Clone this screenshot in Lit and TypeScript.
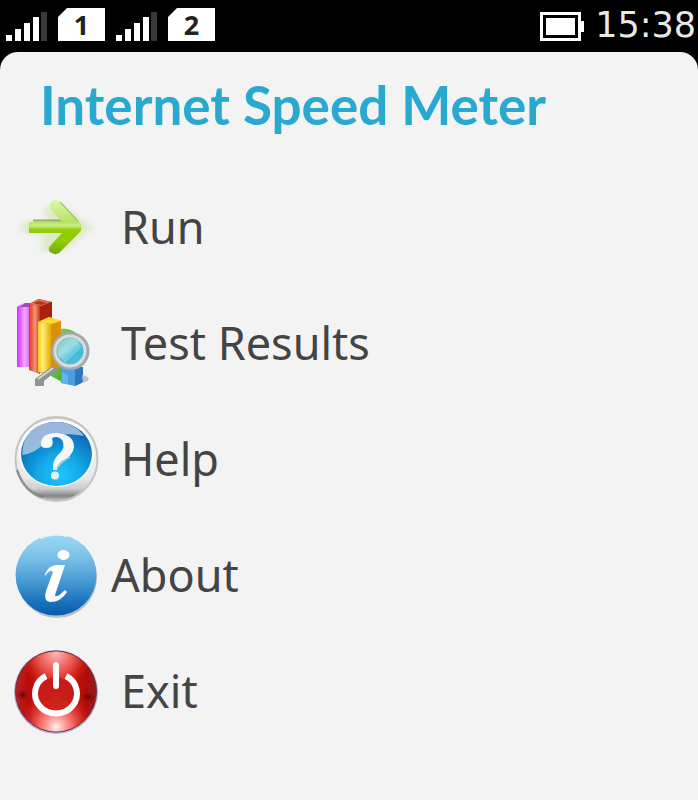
import { LitElement, html, css, svg } from "lit";
import { customElement, property } from "lit/decorators.js";

const runIcon = html`<svg class="icon" viewBox="12 2 88 90" aria-hidden="true">
  <defs>
    <linearGradient id="arrow" x1="0" y1="20" x2="0" y2="75" gradientUnits="userSpaceOnUse">
      <stop offset="0" stop-color="#dcf8a4" /><stop offset=".4" stop-color="#b4e466" /><stop offset=".48" stop-color="#bcea6c" />
      <stop offset=".54" stop-color="#92cc08" /><stop offset=".75" stop-color="#92cb02" /><stop offset="1" stop-color="#6fa516" />
    </linearGradient>
    <filter id="soft" x="-30%" y="-30%" width="160%" height="160%"><feGaussianBlur stdDeviation="4 2" /></filter>
    <filter id="edge"><feGaussianBlur stdDeviation=".7" /></filter>
  </defs>
  <path filter="url(#soft)" opacity=".42" fill="#b9dc83" d="M22 42H46V26H62L92 47L64 71H42V53H22Z" />
  <g filter="url(#edge)">
    <path d="M33 40.500H62" stroke="#819560" stroke-width="2" opacity=".8" />
    <path d="M29 42H62L51 29Q48 24 52 21Q56 18 60 22L80 43Q83 47 80 52L59 73Q54 76 49 71Q48 68 51 65L62 53H29Z" fill="url(#arrow)" />
    <path d="M60 22L78 41" stroke="#9cc46a" stroke-width="1.200" fill="none" />
    <path d="M31 45H79" stroke="#cdf18c" stroke-width="3" opacity=".6" />
  </g>
</svg>`;

const resultsIcon = html`<svg class="icon" viewBox="12 13 88 90" aria-hidden="true">
  <defs>
    <linearGradient id="purple"><stop offset="0" stop-color="#d52bff" /><stop offset=".55" stop-color="#f5a4ff" /><stop offset="1" stop-color="#bd62dd" /></linearGradient>
    <linearGradient id="red"><stop offset="0" stop-color="#f72c05" /><stop offset=".55" stop-color="#e89986" /><stop offset="1" stop-color="#d82f0d" /></linearGradient>
    <linearGradient id="gold"><stop offset="0" stop-color="#ffc40d" /><stop offset=".35" stop-color="#fff276" /><stop offset="1" stop-color="#e3a800" /></linearGradient>
    <linearGradient id="green" x2="1" y2="1"><stop offset="0" stop-color="#90d66c" /><stop offset="1" stop-color="#369b16" /></linearGradient>
    <linearGradient id="lens" x2=".8" y2="1"><stop offset="0" stop-color="#73bec8" /><stop offset=".42" stop-color="#9be0df" /><stop offset=".6" stop-color="#40b9d9" /><stop offset="1" stop-color="#54bde6" /></linearGradient>
    <filter id="edge2"><feGaussianBlur stdDeviation=".7" /></filter>
  </defs>
  <g filter="url(#edge2)">
    <path d="M17 22L24 18L31 19V82H17Z" fill="url(#purple)" />
    <path d="M20 22L25 18H30V22Z" fill="#a64abd" />
    <path d="M29 19L39 14L52 17V86L38 88L29 84Z" fill="#aa220a" />
    <path d="M29 19L40 21V89L29 85Z" fill="url(#red)" />
    <path d="M29 19L38 14L51 17L41 21Z" fill="#db765c" />
    <path d="M33 18L39 16L47 18L41 20Z" fill="#b63415" />
    <path d="M52 47Q64 40 75 47V91L62 97L51 91Z" fill="url(#green)" />
    <path d="M38 37L49 32L61 36V82L50 89L38 87Z" fill="#d99108" />
    <path d="M38 37L51 39V88L38 87Z" fill="url(#gold)" />
    <path d="M38 37L49 32L61 36L51 39Z" fill="#ffda32" />
    <path d="M61 82H82V98L75 101L61 98Z" fill="#4a9fdc" />
    <path d="M75 82H83V97L75 101Z" fill="#2f74c2" />
    <path d="M62 87L68 90V99L62 97Z" fill="#65b6ed" />
    <path d="M82 90Q95 93 83 98Z" fill="#bfc2c4" />
    <path d="M35 101V94L52 81L59 84L44 96V101Z" fill="#8f9491" />
    <path d="M38 94L53 83" stroke="#d2d5d3" stroke-width="2" />
    <circle cx="70.500" cy="66" r="16" fill="url(#lens)" stroke="#a2a9aa" stroke-width="6" />
    <circle cx="70" cy="66" r="15" fill="none" stroke="#d7dddd" stroke-width="3" />
    <path d="M58 70L77 56L82 62L65 78Z" fill="#c4f2ee" opacity=".35" />
  </g>
</svg>`;

const helpIcon = html`<svg class="icon" viewBox="12 9 88 90" aria-hidden="true">
  <defs>
    <linearGradient id="rim" x2="0" y2="1"><stop offset="0" stop-color="#d0d0d0" /><stop offset=".25" stop-color="#f2f2f2" /><stop offset=".72" stop-color="#e9e9e9" /><stop offset=".85" stop-color="#cfcfcf" /><stop offset=".94" stop-color="#858585" /><stop offset="1" stop-color="#c9c9c9" /></linearGradient>
    <radialGradient id="blue" cx=".55" cy=".82" r=".75"><stop offset="0" stop-color="#20c5ff" /><stop offset=".4" stop-color="#13a8e8" /><stop offset="1" stop-color="#075fae" /></radialGradient>
    <linearGradient id="shine" x2="0" y2="1"><stop offset="0" stop-color="#9bb5dc" /><stop offset="1" stop-color="#bed3e7" stop-opacity=".75" /></linearGradient>
    <filter id="edge3"><feGaussianBlur stdDeviation=".7" /></filter>
  </defs>
  <g filter="url(#edge3)">
    <ellipse cx="56.500" cy="54" rx="41" ry="42" fill="url(#rim)" stroke="#c3c3c3" stroke-width="2" />
    <path d="M17 65Q25 88 43 92" fill="none" stroke="#777" stroke-width="2.500" opacity=".65" />
    <ellipse cx="56.500" cy="48" rx="38" ry="34" fill="#fafafa" />
    <ellipse cx="56.500" cy="49" rx="35.500" ry="32" fill="url(#blue)" />
    <path d="M22 50Q23 18 56 17Q74 17 84 31Q56 25 43 39Q36 48 22 50Z" fill="url(#shine)" />
    <path d="M41 38Q42 28 56 28Q74 29 74 42Q73 51 62 56Q57 60 57 65H53Q52 54 60 48Q66 42 62 35Q58 30 52 33Q55 43 46 43Q40 43 41 38Z" fill="#f5f8f8" />
    <ellipse cx="55" cy="70.500" rx="4" ry="4" fill="#e0f3f7" />
    <path d="M57 63Q62 56 70 52" stroke="#aecbcf" stroke-width="1.500" fill="none" />
  </g>
</svg>`;

const aboutIcon = html`<svg class="icon" viewBox="12 10 88 90" aria-hidden="true">
  <defs>
    <linearGradient id="sky" x2="0" y2="1"><stop offset="0" stop-color="#9cd9f5" /><stop offset=".25" stop-color="#80c3e9" /><stop offset=".55" stop-color="#4d9fd6" /><stop offset=".85" stop-color="#176fb9" /><stop offset="1" stop-color="#075aaa" /></linearGradient>
    <filter id="edge4"><feGaussianBlur stdDeviation=".7" /></filter>
  </defs>
  <g filter="url(#edge4)">
    <ellipse cx="57" cy="57" rx="40" ry="41" fill="#b9bfc4" />
    <circle cx="56" cy="55" r="40.500" fill="url(#sky)" />
    <path d="M40 18Q54 12 67 16" stroke="#dff4fb" stroke-width="2" fill="none" />
    <ellipse cx="63.500" cy="35" rx="6" ry="5" fill="#fff" />
    <path d="M45 54Q48 46 56 45H65L55 75Q56 79 65 70L67 72Q61 82 50 82Q43 81 46 71L53 52Q50 49 45 56Z" fill="#fff" />
  </g>
</svg>`;

const exitIcon = html`<svg class="icon" viewBox="12 6 88 90" aria-hidden="true">
  <defs>
    <linearGradient id="ruby"><stop offset="0" stop-color="#b92123" /><stop offset=".18" stop-color="#b90c07" /><stop offset=".5" stop-color="#df3430" /><stop offset=".82" stop-color="#b90b06" /><stop offset="1" stop-color="#94191d" /></linearGradient>
    <radialGradient id="glowTop" cx="56" cy="13" r="36" gradientUnits="userSpaceOnUse"><stop offset="0" stop-color="#ffbaba" /><stop offset=".5" stop-color="#f36762" stop-opacity=".8" /><stop offset="1" stop-color="#dd302b" stop-opacity="0" /></radialGradient>
    <radialGradient id="glowBottom" cx="56" cy="87" r="37" gradientUnits="userSpaceOnUse"><stop offset="0" stop-color="#fff0eb" /><stop offset=".45" stop-color="#ff7770" stop-opacity=".85" /><stop offset="1" stop-color="#dd302b" stop-opacity="0" /></radialGradient>
    <radialGradient id="dark"><stop offset="0" stop-color="#6f0000" /><stop offset="1" stop-color="#8f0000" stop-opacity="0" /></radialGradient>
    <filter id="edge5"><feGaussianBlur stdDeviation=".7" /></filter>
  </defs>
  <g filter="url(#edge5)">
    <circle cx="56" cy="52" r="42" fill="#aeb2ca" />
    <circle cx="56" cy="51.500" r="40.500" fill="url(#ruby)" stroke="#7d2740" stroke-width="1" />
    <circle cx="56" cy="51.500" r="40" fill="url(#glowTop)" />
    <circle cx="56" cy="51.500" r="40" fill="url(#glowBottom)" />
    <ellipse cx="23" cy="55" rx="7" ry="6" fill="url(#dark)" />
    <ellipse cx="88" cy="57" rx="8" ry="6" fill="url(#dark)" />
    <circle cx="56" cy="54" r="17" fill="#c71c15" opacity=".85" />
    <path d="M46 36A21 20 0 1 0 66 36" fill="none" stroke="#fff" stroke-width="6" />
    <path d="M56 25V46" stroke="#fff" stroke-width="6" stroke-linecap="round" />
  </g>
</svg>`;

const items = [
  { label: "Run", icon: runIcon },
  { label: "Test Results", icon: resultsIcon },
  { label: "Help", icon: helpIcon },
  { label: "About", icon: aboutIcon, tight: true },
  { label: "Exit", icon: exitIcon },
];

@customElement("sim-status")
class SimStatus extends LitElement {
  @property() slotNumber = "1";

  static styles = css`
    :host { display: flex; gap: 11px; }
    svg { display: block; width: 41px; height: 33px; }
    .card {
      width: 47px; height: 33px; text-align: center;
      background: #fff; color: #222;
      font: bold 27px/33px "Noto Sans", sans-serif;
      clip-path: polygon(9px 0, 100% 0, 100% 100%, 0 100%, 0 9px);
    }
  `;

  render() {
    const bars = [6, 12, 18, 24, 29];
    return html`<svg viewBox="0 0 41 33" role="img" aria-label="Signal strength">
        ${bars.map((h, i) => svg`<rect x=${i * 9 - (i > 3 ? 1 : 0)} y=${33 - h} width="6" height=${h} fill=${i === 4 ? "#383838" : "#fff"} />`)}
      </svg>
      <span class="card">${this.slotNumber}</span>`;
  }
}

@customElement("app-root")
class AppRoot extends LitElement {
  static styles = css`
    :host {
      display: flex; flex-direction: column; min-height: 100vh;
      background: #000; color: #444;
      font-family: "Noto Sans", sans-serif;
    }
    .status {
      display: flex; align-items: center; gap: 11px;
      box-sizing: border-box; height: 52px; padding: 0 2px 3px 6px;
    }
    .battery { display: block; width: 44px; height: 29px; margin-left: auto; margin-top: 4px; }
    .clock { color: #e8e8e8; font: 35px/48px "DejaVu Sans", sans-serif; }
    .screen { flex: 1; background: #f3f3f3; border-radius: 18px 18px 0 0; }
    h1 {
      margin: 0; padding: 21px 40px 32px;
      color: #29a8d0; font: bold 53px/64px Lato, sans-serif;
    }
    ul { margin: 0; padding: 0; list-style: none; }
    .item {
      display: flex; align-items: center; gap: 21px;
      width: 100%; height: 116px; padding: 0 12px; border: 0;
      background: none; color: inherit; text-align: left;
      font: 45px/60px "Noto Sans", sans-serif;
    }
    .item.tight { gap: 11px; }
    .icon { flex: none; width: 88px; height: 90px; }
  `;

  render() {
    return html`
      <header class="status">
        <sim-status .slotNumber=${"1"}></sim-status>
        <sim-status .slotNumber=${"2"}></sim-status>
        <svg class="battery" viewBox="0 0 44 29" role="img" aria-label="Battery full">
          <path d="M0 0H41V9H44V20H41V29H0Z" fill="#fff" />
          <path d="M3 3H38V26H3Z" fill="#000" />
          <path d="M6 6H35V23H6Z" fill="#fff" />
        </svg>
        <time class="clock">15:38</time>
      </header>
      <main class="screen">
        <h1>Internet Speed Meter</h1>
        <nav>
          <ul>
            ${items.map((item) => html`<li>
              <button type="button" class=${item.tight ? "item tight" : "item"}>${item.icon}<span>${item.label}</span></button>
            </li>`)}
          </ul>
        </nav>
      </main>
    `;
  }
}
